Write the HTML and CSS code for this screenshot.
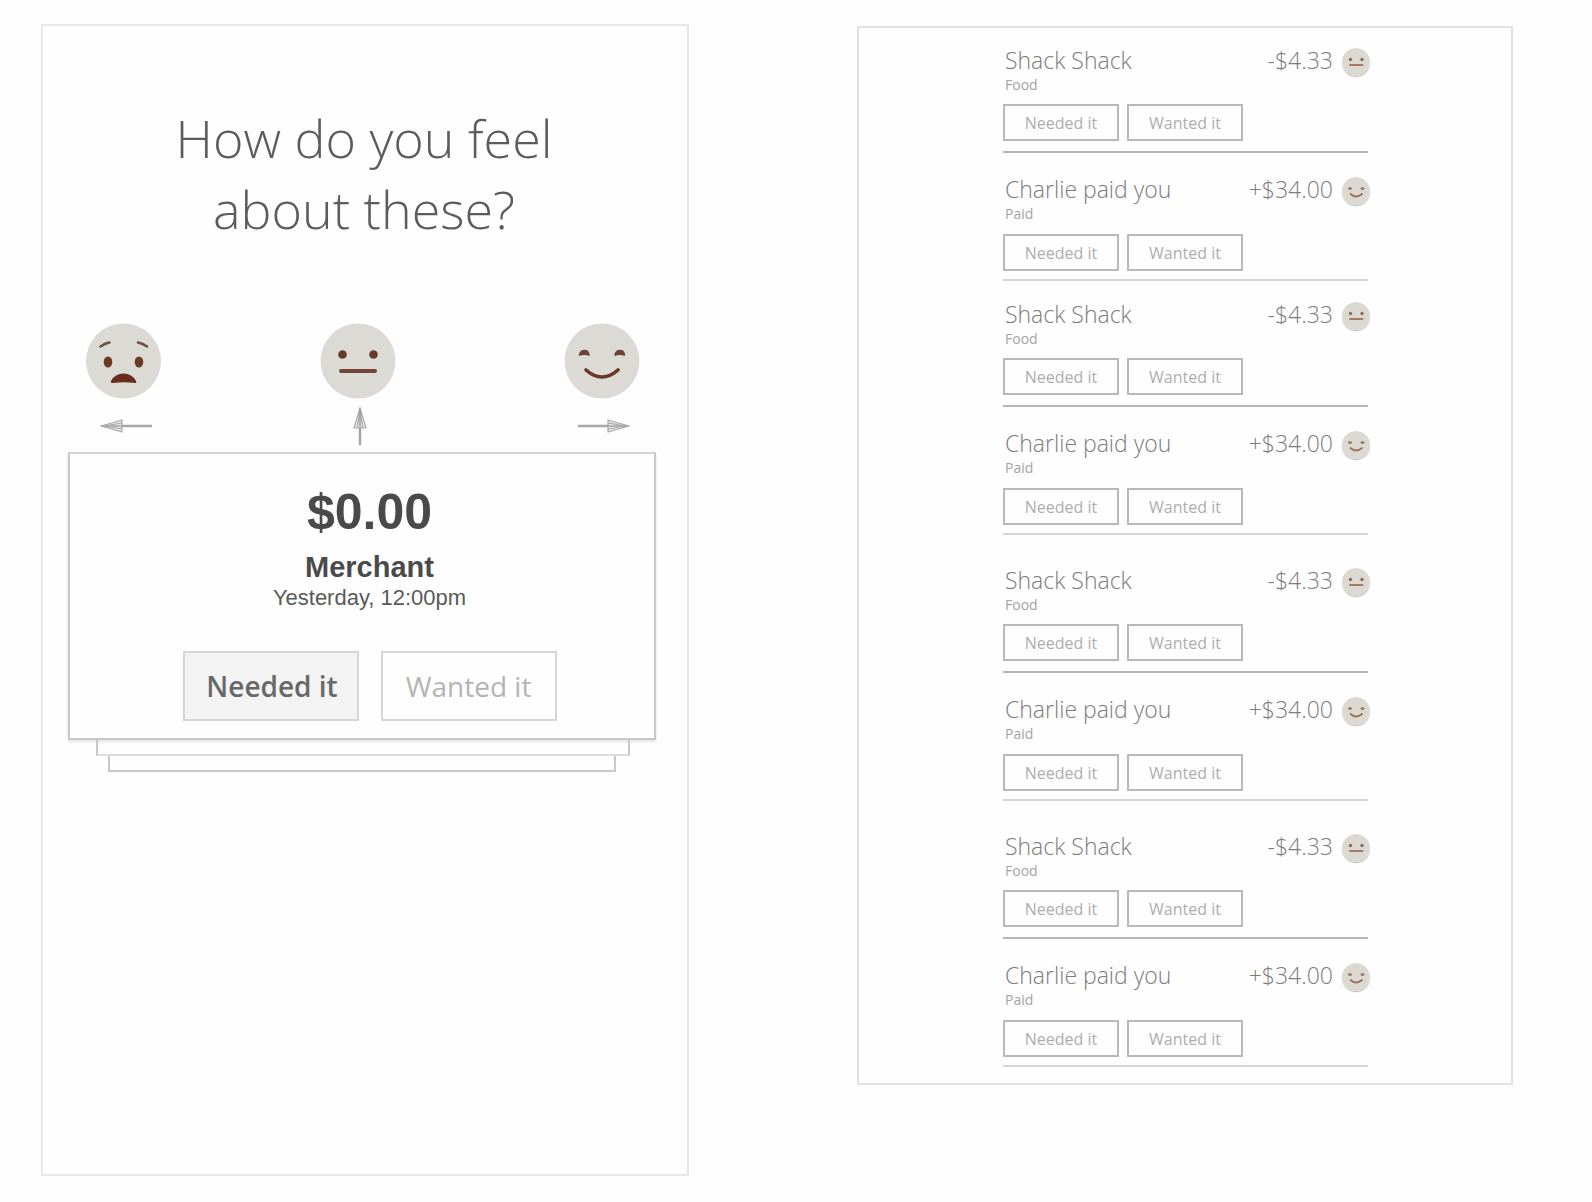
FILE: index.html
```
<!DOCTYPE html>
<html lang="en">
<head>
<meta charset="utf-8">
<meta name="viewport" content="width=device-width, initial-scale=1">
<title>How do you feel about these?</title>
<link rel="stylesheet" href="styles.css">
</head>
<body>
<svg class="sprite" aria-hidden="true">
  <symbol id="face-sad" viewBox="0 0 76 76">
    <circle cx="37.500" cy="38" r="37.500" fill="#dcdad4"/>
    <path d="M14.500 23.500q4-3 9-4M52 19.500q5 1 9 4" fill="none" stroke="#6b5147" stroke-width="2.600" stroke-linecap="round"/>
    <ellipse cx="22" cy="39" rx="4.300" ry="5.600" fill="#6b3a22"/>
    <ellipse cx="53" cy="39" rx="4.300" ry="5.600" fill="#6b3a22"/>
    <path d="M25 58Q29 50.500 37.500 50.500T50 58Q51 60 49 60Q38 58.500 27 60Q24 60 25 58Z" fill="#682d1b"/>
  </symbol>
  <symbol id="face-neutral" viewBox="0 0 76 76">
    <circle cx="38" cy="38" r="37.500" fill="#dcdad4"/>
    <circle cx="22.500" cy="31.500" r="4.300" fill="#653a2b"/>
    <circle cx="53.500" cy="31.500" r="4.300" fill="#653a2b"/>
    <path d="M21 48h34" stroke="#744438" stroke-width="4" stroke-linecap="round"/>
  </symbol>
  <symbol id="face-happy" viewBox="0 0 76 76">
    <circle cx="38" cy="38" r="37.500" fill="#dcdad4"/>
    <path d="M15.500 32Q16.500 27.500 20.500 27.500T25 32Q20.500 30.500 15.500 32ZM51 32Q52 27.500 56 27.500T60.500 32Q56 30.500 51 32Z" fill="#6b4338" stroke="#6b4338" stroke-width="1.500" stroke-linejoin="round"/>
    <path d="M22 47Q38 61 54 47" fill="none" stroke="#6b3527" stroke-width="3.600" stroke-linecap="round"/>
  </symbol>
  <symbol id="mini-neutral" viewBox="0 0 28 28">
    <circle cx="14" cy="14" r="14" fill="#dcd9d2"/>
    <circle cx="8.500" cy="11.500" r="1.700" fill="#926a56"/>
    <circle cx="20" cy="11.500" r="1.700" fill="#926a56"/>
    <path d="M8 17h12.500" stroke="#a67a66" stroke-width="2" stroke-linecap="round"/>
  </symbol>
  <symbol id="mini-happy" viewBox="0 0 28 28">
    <circle cx="14" cy="14" r="14" fill="#dcd9d2"/>
    <ellipse cx="8" cy="11.500" rx="2" ry="1.500" fill="#a07a68"/>
    <ellipse cx="20.500" cy="11.500" rx="2" ry="1.500" fill="#a07a68"/>
    <path d="M8.500 17Q14 22 20 17" fill="none" stroke="#a07058" stroke-width="1.800" stroke-linecap="round"/>
  </symbol>
  <symbol id="arrow" viewBox="0 0 52 14">
    <path d="M0 7h44" stroke="#a9a9a9" stroke-width="2.400"/>
    <path d="M30 1L51 7L30 13ZM30 4l18 3l-18 3" fill="#e9e9e9" stroke="#a9a9a9" stroke-width="1.200"/>
    <path d="M30 7h21" stroke="#a9a9a9" stroke-width="1.600"/>
  </symbol>
</svg>

<main class="screens">
  <section class="panel review">
    <h1 class="question">How do you feel<br>about these?</h1>
    <div class="deck">
      <div class="moods">
        <div class="mood">
          <svg class="face" role="img" aria-label="Unhappy"><use href="#face-sad"/></svg>
          <span class="pointer"><svg class="arrow arrow-left" viewBox="0 0 52 14" aria-hidden="true"><use href="#arrow"/></svg></span>
        </div>
        <div class="mood">
          <svg class="face" role="img" aria-label="Neutral"><use href="#face-neutral"/></svg>
          <span class="pointer"><svg class="arrow-up" viewBox="0 0 14 38" aria-hidden="true">
            <path d="M7 38V4" stroke="#a3a3a3" stroke-width="2.400"/>
            <path d="M1 21L7 1L13 21ZM4 21L7 4L10 21" fill="#e9e9e9" stroke="#a9a9a9" stroke-width="1.200"/>
            <path d="M7 22V1" stroke="#a3a3a3" stroke-width="1.600"/>
          </svg></span>
        </div>
        <div class="mood">
          <svg class="face" role="img" aria-label="Happy"><use href="#face-happy"/></svg>
          <span class="pointer"><svg class="arrow" viewBox="0 0 52 14" aria-hidden="true"><use href="#arrow"/></svg></span>
        </div>
      </div>
      <article class="card">
        <p class="card-amount">$0.00</p>
        <h2 class="card-merchant">Merchant</h2>
        <p class="card-date">Yesterday, 12:00pm</p>
        <div class="card-actions">
          <button class="choice choice-selected" type="button" aria-pressed="true">Needed it</button>
          <button class="choice" type="button" aria-pressed="false">Wanted it</button>
        </div>
      </article>
      <div class="sheet sheet-second"></div>
      <div class="sheet sheet-third"></div>
    </div>
  </section>

  <section class="panel history">
    <ul class="group">
      <li class="entry">
        <div class="entry-head"><h3 class="entry-title">Shack Shack</h3><span class="entry-amount">-$4.33</span><svg class="mini" role="img" aria-label="Neutral"><use href="#mini-neutral"/></svg></div>
        <p class="entry-kind">Food</p>
        <div class="entry-actions"><button class="tag" type="button">Needed it</button><button class="tag" type="button">Wanted it</button></div>
      </li>
      <li class="entry">
        <div class="entry-head"><h3 class="entry-title">Charlie paid you</h3><span class="entry-amount">+$34.00</span><svg class="mini" role="img" aria-label="Happy"><use href="#mini-happy"/></svg></div>
        <p class="entry-kind">Paid</p>
        <div class="entry-actions"><button class="tag" type="button">Needed it</button><button class="tag" type="button">Wanted it</button></div>
      </li>
    </ul>
    <ul class="group">
      <li class="entry">
        <div class="entry-head"><h3 class="entry-title">Shack Shack</h3><span class="entry-amount">-$4.33</span><svg class="mini" role="img" aria-label="Neutral"><use href="#mini-neutral"/></svg></div>
        <p class="entry-kind">Food</p>
        <div class="entry-actions"><button class="tag" type="button">Needed it</button><button class="tag" type="button">Wanted it</button></div>
      </li>
      <li class="entry">
        <div class="entry-head"><h3 class="entry-title">Charlie paid you</h3><span class="entry-amount">+$34.00</span><svg class="mini" role="img" aria-label="Happy"><use href="#mini-happy"/></svg></div>
        <p class="entry-kind">Paid</p>
        <div class="entry-actions"><button class="tag" type="button">Needed it</button><button class="tag" type="button">Wanted it</button></div>
      </li>
    </ul>
    <ul class="group group-spaced">
      <li class="entry">
        <div class="entry-head"><h3 class="entry-title">Shack Shack</h3><span class="entry-amount">-$4.33</span><svg class="mini" role="img" aria-label="Neutral"><use href="#mini-neutral"/></svg></div>
        <p class="entry-kind">Food</p>
        <div class="entry-actions"><button class="tag" type="button">Needed it</button><button class="tag" type="button">Wanted it</button></div>
      </li>
      <li class="entry">
        <div class="entry-head"><h3 class="entry-title">Charlie paid you</h3><span class="entry-amount">+$34.00</span><svg class="mini" role="img" aria-label="Happy"><use href="#mini-happy"/></svg></div>
        <p class="entry-kind">Paid</p>
        <div class="entry-actions"><button class="tag" type="button">Needed it</button><button class="tag" type="button">Wanted it</button></div>
      </li>
    </ul>
    <ul class="group group-spaced">
      <li class="entry">
        <div class="entry-head"><h3 class="entry-title">Shack Shack</h3><span class="entry-amount">-$4.33</span><svg class="mini" role="img" aria-label="Neutral"><use href="#mini-neutral"/></svg></div>
        <p class="entry-kind">Food</p>
        <div class="entry-actions"><button class="tag" type="button">Needed it</button><button class="tag" type="button">Wanted it</button></div>
      </li>
      <li class="entry">
        <div class="entry-head"><h3 class="entry-title">Charlie paid you</h3><span class="entry-amount">+$34.00</span><svg class="mini" role="img" aria-label="Happy"><use href="#mini-happy"/></svg></div>
        <p class="entry-kind">Paid</p>
        <div class="entry-actions"><button class="tag" type="button">Needed it</button><button class="tag" type="button">Wanted it</button></div>
      </li>
    </ul>
  </section>
</main>
</body>
</html>
```
FILE: styles.css
```
*,
*::before,
*::after {
  box-sizing: border-box;
}

body {
  margin: 0;
  background: #fefefe;
  color: #555;
  font-family: "Open Sans", "Noto Sans", sans-serif;
}

h1,
h2,
h3,
p,
ul {
  margin: 0;
  padding: 0;
  font-weight: inherit;
}

ul {
  list-style: none;
}

button {
  padding: 0;
  font-family: inherit;
  cursor: pointer;
}

.sprite {
  position: absolute;
  width: 0;
  height: 0;
}

.screens {
  display: grid;
  grid-template-columns: 648fr 656fr;
  column-gap: 168px;
  min-height: 100vh;
  padding: 24px 79px 26px 41px;
}

.panel {
  border: 2px solid #e2e2e2;
}

/* Swipe screen */

.review {
  padding: 76px 31px 24px 25px;
  border-color: #e8e8e8;
}

.question {
  padding-left: 4px;
  color: #5c5c5c;
  font-size: 52px;
  font-weight: 300;
  line-height: 71px;
  text-align: center;
}

.deck {
  margin-top: 79px;
}

.moods {
  display: grid;
  grid-template-columns: 234fr 244fr 76px;
  padding: 0 16px 0 18px;
}

.mood {
  display: flex;
  flex-direction: column;
  align-items: center;
  gap: 8px;
  width: 76px;
}

.face {
  display: block;
  width: 76px;
  height: 76px;
}

.pointer {
  display: flex;
  align-items: center;
  height: 38px;
  padding-left: 3px;
}

.arrow {
  width: 52px;
  height: 14px;
}

.arrow-left {
  transform: rotate(180deg);
}

.arrow-up {
  width: 14px;
  height: 38px;
}

.card {
  margin-top: 7px;
  padding: 29px 0 17px 15px;
  border: 2px solid #c8c8c8;
  border-top-color: #d2d2d2;
  box-shadow: 0 2px 3px #e4e4e4;
  color: #4a4a4a;
  font-family: "Liberation Sans", Arial, sans-serif;
  text-align: center;
}

.card-amount {
  font-size: 50px;
  font-weight: 700;
  line-height: 58px;
}

.card-merchant {
  margin-top: 9px;
  font-size: 29px;
  font-weight: 700;
  line-height: 34px;
}

.card-date {
  margin-top: 1px;
  color: #5a5a5a;
  font-size: 22px;
  line-height: 26px;
}

.card-actions {
  display: flex;
  justify-content: center;
  gap: 22px;
  margin-top: 40px;
  font-family: "Open Sans", "Noto Sans", sans-serif;
}

.choice {
  width: 176px;
  height: 70px;
  border: 2px solid #d6d6d6;
  background: #fefefe;
  color: #b4b4b4;
  font-size: 28px;
  line-height: 38px;
}

.choice-selected {
  padding-left: 3px;
  background: #f3f3f3;
  color: #686868;
  font-weight: 600;
}

.sheet {
  height: 16px;
  border: 2px solid #c8c8c8;
  border-top: 0;
}

.sheet-second {
  margin: 0 26px 0 28px;
  border-bottom-color: #dcdcdc;
}

.sheet-third {
  margin: 0 40px;
}

/* History screen */

.history {
  align-self: start;
  margin-top: 2px;
  padding: 16px 143px 16px 144px;
}

.group + .group {
  margin-top: 17px;
}

.group + .group-spaced {
  margin-top: 29px;
}

.entry {
  padding-bottom: 10px;
  border-bottom: 2px solid #b6b6b6;
}

.entry + .entry {
  padding: 20px 0 8px;
  border-bottom-color: #d4d4d4;
}

.entry-head {
  display: flex;
  align-items: center;
  margin-right: -2px;
  padding-left: 2px;
  color: #7c7c7c;
  font-size: 23px;
  font-weight: 300;
  line-height: 32px;
}

.entry-title {
  flex: 1;
  font-size: 23px;
}

.mini {
  width: 28px;
  height: 28px;
  margin-top: 3px;
  margin-left: 9px;
  border-radius: 50%;
  box-shadow: 0 1px 1px #b9b7b2;
}

.entry-kind {
  padding-left: 2px;
  color: #a4a4a4;
  font-size: 14px;
  line-height: 18px;
}

.entry-actions {
  display: flex;
  gap: 8px;
  margin-top: 10px;
}

.entry + .entry .entry-actions {
  margin-top: 11px;
}

.tag {
  width: 116px;
  height: 37px;
  border: 2px solid #b9b9b9;
  background: #fefefe;
  color: #adadad;
  font-size: 16px;
  line-height: 22px;
}
```
